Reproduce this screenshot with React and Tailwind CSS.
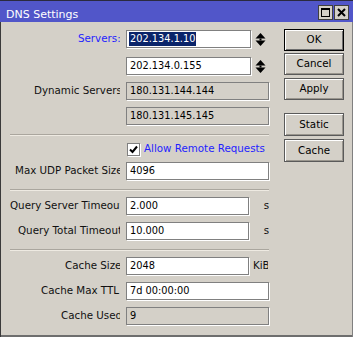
import React from "react";

function Field({ value, w = "w-[143px]", gray = false, selected = false }) {
  return (
    <div
      className={`h-[18px] ${w} shrink-0 border border-[#808080] shadow-[1px_1px_0_#ffffff] ${
        gray ? "bg-[#d4d0c8]" : "bg-white"
      } flex items-stretch ${selected ? "pl-[2px]" : "pl-[3px]"} text-[9.8px] text-black whitespace-nowrap overflow-hidden`}
    >
      {selected ? (
        <span className="my-[1px] px-[1px] bg-[#0a246a] text-white flex items-center">{value}</span>
      ) : (
        <span className="flex items-center">{value}</span>
      )}
    </div>
  );
}

function Label({ text, pl, blue = false }) {
  return (
    <div
      className={`w-[120px] shrink-0 overflow-hidden whitespace-nowrap text-[10.3px] ${pl} ${
        blue ? "text-[#1f1fff]" : "text-[#111]"
      }`}
    >
      {text}
    </div>
  );
}

function Row({ mt, children }) {
  return <div className={`flex items-center h-[18px] ${mt}`}>{children}</div>;
}

function Sep({ mt }) {
  return (
    <div className={`${mt} ml-[10px] w-[259px] h-[2px] border-t border-[#aaa69e] border-b border-b-[#eeeae2]`} />
  );
}

function Spin() {
  return (
    <svg width="11" height="13" viewBox="0 0 11 13" className="ml-[4px] shrink-0">
      <polygon points="5.5,0 10.5,5.5 0.5,5.5" fill="#000" />
      <rect x="4.5" y="5.5" width="2" height="2" fill="#000" />
      <polygon points="0.5,7.5 10.5,7.5 5.5,13" fill="#000" />
    </svg>
  );
}

function Btn({ children, def = false, h = "h-[22px]", mt = "" }) {
  return (
    <div
      className={`${mt} ${h} w-[60px] flex items-center justify-center text-[10.3px] text-black ${
        def
          ? "border border-black shadow-[inset_1px_1px_0_#ffffff,inset_-1px_-1px_0_#6e6e6e]"
          : "border border-[#5a5a5a] shadow-[inset_1px_1px_0_#ffffff,inset_-1px_-1px_0_#9a968e]"
      }`}
    >
      {children}
    </div>
  );
}

export default function App() {
  return (
    <div className="w-[353px] h-[337px] bg-[#d4d0c8] flex flex-col overflow-hidden font-['DejaVu_Sans',sans-serif] shadow-[inset_1px_0_0_#3a3a3a,inset_-1px_0_0_#808080,inset_0_-2px_0_#6e6e6e]">
      {/* Title bar */}
      <div className="h-[22px] shrink-0 bg-[#5156c9] border-t border-[#2a2a40] flex items-start pl-[6px] pr-[4px]">
        <span className="pt-[7px] leading-[13px] text-[11px] text-white">DNS Settings</span>
        <div className="ml-auto mt-[4px] flex gap-[1px]">
          <div className="w-[15px] h-[15px] bg-[#d4d0c8] border border-[#404040] flex items-center justify-center">
            <div className="w-[9px] h-[9px] border border-black border-t-2" />
          </div>
          <div className="w-[15px] h-[15px] bg-[#d4d0c8] border border-[#404040] flex items-center justify-center">
            <svg width="9" height="9" viewBox="0 0 9 9">
              <path d="M1 1 L8 8 M8 1 L1 8" stroke="#000" strokeWidth="2" />
            </svg>
          </div>
        </div>
      </div>

      {/* Body */}
      <div className="flex flex-1">
        <div className="w-[284px] shrink-0 flex flex-col">
          <Row mt="mt-[8px]">
            <Label text="Servers:" pl="pl-[78px]" blue />
            <div className="ml-[6px] flex items-center">
              <Field value="202.134.1.10" w="w-[125px]" selected />
              <Spin />
            </div>
          </Row>
          <Row mt="mt-[9px]">
            <Label text="" pl="pl-[78px]" />
            <div className="ml-[6px] flex items-center">
              <Field value="202.134.0.155" w="w-[125px]" />
              <Spin />
            </div>
          </Row>
          <Row mt="mt-[7px]">
            <Label text="Dynamic Servers" pl="pl-[34px]" />
            <div className="ml-[6px]">
              <Field value="180.131.144.144" gray />
            </div>
          </Row>
          <Row mt="mt-[7px]">
            <Label text="" pl="pl-[34px]" />
            <div className="ml-[6px]">
              <Field value="180.131.145.145" gray />
            </div>
          </Row>

          <Sep mt="mt-[9px]" />

          <Row mt="mt-[4px]">
            <div className="w-[120px] shrink-0" />
            <div className="ml-[7px] flex items-center">
              <div className="w-[13px] h-[13px] bg-white border border-[#808080] shadow-[1px_1px_0_#ffffff] flex items-center justify-center">
                <svg width="9" height="9" viewBox="0 0 9 9">
                  <path d="M1 4.5 L3.5 7 L8 1.5" stroke="#000" strokeWidth="2" fill="none" />
                </svg>
              </div>
              <span className="ml-[4px] text-[10.3px] text-[#1f1fff] whitespace-nowrap">Allow Remote Requests</span>
            </div>
          </Row>
          <Row mt="mt-[4px]">
            <Label text="Max UDP Packet Size" pl="pl-[15px]" />
            <div className="ml-[6px]">
              <Field value="4096" />
            </div>
          </Row>

          <Sep mt="mt-[9px]" />

          <Row mt="mt-[6px]">
            <Label text="Query Server Timeout" pl="pl-[10px]" />
            <div className="ml-[6px] flex items-center">
              <Field value="2.000" w="w-[123px]" />
              <div className="ml-[4px] w-[16px] overflow-hidden whitespace-nowrap text-right text-[10.3px] text-[#111]">s</div>
            </div>
          </Row>
          <Row mt="mt-[7px]">
            <Label text="Query Total Timeout" pl="pl-[18px]" />
            <div className="ml-[6px] flex items-center">
              <Field value="10.000" w="w-[123px]" />
              <div className="ml-[4px] w-[16px] overflow-hidden whitespace-nowrap text-right text-[10.3px] text-[#111]">s</div>
            </div>
          </Row>

          <Sep mt="mt-[9px]" />

          <Row mt="mt-[6px]">
            <Label text="Cache Size" pl="pl-[65px]" />
            <div className="ml-[6px] flex items-center">
              <Field value="2048" w="w-[123px]" />
              <div className="ml-[4px] w-[15px] overflow-hidden whitespace-nowrap text-[10.3px] text-[#111]">KiB</div>
            </div>
          </Row>
          <Row mt="mt-[7px]">
            <Label text="Cache Max TTL" pl="pl-[41px]" />
            <div className="ml-[6px]">
              <Field value="7d 00:00:00" />
            </div>
          </Row>
          <Row mt="mt-[7px]">
            <Label text="Cache Used" pl="pl-[61px]" />
            <div className="ml-[6px]">
              <Field value="9" gray />
            </div>
          </Row>
        </div>

        {/* Buttons */}
        <div className="flex flex-col pt-[7px]">
          <Btn def>OK</Btn>
          <Btn mt="mt-[2px]">Cancel</Btn>
          <Btn mt="mt-[3px]">Apply</Btn>
          <Btn mt="mt-[13px]" h="h-[23px]">Static</Btn>
          <Btn mt="mt-[3px]" h="h-[23px]">Cache</Btn>
        </div>
      </div>
    </div>
  );
}
